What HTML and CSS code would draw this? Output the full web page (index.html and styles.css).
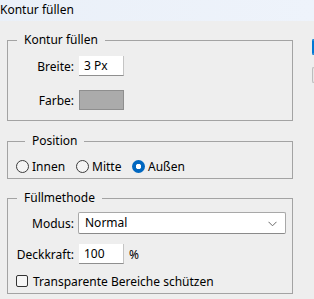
FILE: index.html
```html
<!DOCTYPE html>
<html lang="de">
<head>
<meta charset="utf-8">
<title>Kontur füllen</title>
<link rel="stylesheet" href="styles.css">
</head>
<body>
<div class="titlebar">Kontur füllen</div>
<div class="main">
  <div class="groups">
    <fieldset class="group g1">
      <legend>Kontur füllen</legend>
      <div class="row">
        <span class="label">Breite:</span>
        <span class="field">3 Px</span>
      </div>
      <div class="row row-color">
        <span class="label">Farbe:</span>
        <span class="swatch"></span>
      </div>
    </fieldset>
    <fieldset class="group g2">
      <legend>Position</legend>
      <div class="radios">
        <span class="radio"><span class="dot"></span>Innen</span>
        <span class="radio"><span class="dot"></span>Mitte</span>
        <span class="radio"><span class="dot on"></span>Außen</span>
      </div>
    </fieldset>
    <fieldset class="group g3">
      <legend>Füllmethode</legend>
      <div class="row">
        <span class="label">Modus:</span>
        <span class="select">Normal
          <svg class="chev" width="9" height="6" viewBox="0 0 9 6"><path d="M0.5 0.8 L4.5 4.8 L8.5 0.8" fill="none" stroke="#6a6a6a" stroke-width="1"/></svg>
        </span>
      </div>
      <div class="row row-opacity">
        <span class="label">Deckkraft:</span>
        <span class="field">100</span>
        <span class="unit">%</span>
      </div>
      <div class="check">
        <span class="box"></span>Transparente Bereiche schützen
      </div>
    </fieldset>
  </div>
  <div class="buttons">
    <span class="btn primary"></span>
    <span class="btn"></span>
  </div>
</div>
</body>
</html>
```
FILE: styles.css
```css
* { box-sizing: border-box; }
html, body { margin: 0; padding: 0; }
body {
  width: 314px;
  height: 299px;
  overflow: hidden;
  background: #eeeeee;
  font-family: "Noto Sans", "Open Sans", sans-serif;
  font-size: 12px;
  color: #000;
}
.titlebar {
  height: 21px;
  line-height: 20px;
  background: linear-gradient(90deg, #eaf0f8, #eef3fb);
  white-space: nowrap;
}
.main {
  display: flex;
  align-items: flex-start;
  width: 314px;
}
.groups {
  width: 286px;
  flex: none;
  margin-left: 7px;
  margin-top: 11px;
  display: flex;
  flex-direction: column;
}
.group {
  margin: 0;
  padding: 0;
  border: 1px solid #a3a3a3;
  min-width: 0;
}
.group legend {
  margin-left: 9px;
  padding: 0 7px;
  line-height: 16px;
  height: 16px;
}
.g1 { padding: 8px 0 10px; }
.g2 { margin-top: 12px; padding: 9px 0 4px 8px; }
.g3 { margin-top: 11px; padding: 6px 0 4px; }

.row {
  display: flex;
  align-items: center;
}
.label {
  width: 66px;
  text-align: right;
  margin-right: 5px;
  white-space: nowrap;
}
.row-color { margin-top: 14px; }
.field {
  width: 45px;
  height: 20px;
  line-height: 19px;
  padding-left: 5px;
  background: #fff;
  border-right: 1px solid #c4c4c4;
  border-bottom: 1px solid #8f8f8f;
}
.swatch {
  width: 45px;
  height: 20px;
  background: #ababab;
  border: 1px solid #8e8e8e;
}
.radios {
  display: grid;
  grid-template-columns: 60px 56px auto;
  height: 16px;
  align-items: center;
}
.radio {
  display: flex;
  align-items: center;
  white-space: nowrap;
}
.dot {
  width: 13px;
  height: 13px;
  border: 1px solid #3c3c3c;
  border-radius: 50%;
  background: #f4f4f4;
  margin-right: 3px;
  flex: none;
}
.dot.on {
  border: none;
  background: radial-gradient(circle, #fff 0 2.5px, #0067c0 3px);
}
.select {
  position: relative;
  width: 208px;
  height: 22px;
  margin-left: -1px;
  line-height: 20px;
  padding-left: 6px;
  background: #fff;
  border: 1px solid #a8a8a8;
  border-bottom-color: #8a8a8a;
  border-radius: 2px;
}
.chev {
  position: absolute;
  right: 8px;
  top: 8px;
}
.row-opacity { margin-top: 10px; }
.unit { margin-left: 5px; }
.check {
  display: flex;
  align-items: center;
  height: 16px;
  margin-top: 9px;
  padding-left: 8px;
  white-space: nowrap;
}
.box {
  width: 12px;
  height: 12px;
  border: 1px solid #333;
  border-radius: 2px;
  background: #f6f6f6;
  margin-right: 5px;
  flex: none;
}
.buttons {
  flex: 1;
  min-width: 0;
  margin-left: 19px;
  margin-top: 18px;
  display: flex;
  flex-direction: column;
  gap: 12px;
}
.btn {
  display: block;
  height: 16px;
  border: 1px solid #bdbdbd;
  border-right: none;
  border-radius: 3px 0 0 3px;
  background: #e8e8e8;
}
.btn.primary {
  border: 1px solid #0078d4;
  border-right: none;
  box-shadow: inset 1px 0 0 #0078d4;
  background: #e5f1fb;
}
```
